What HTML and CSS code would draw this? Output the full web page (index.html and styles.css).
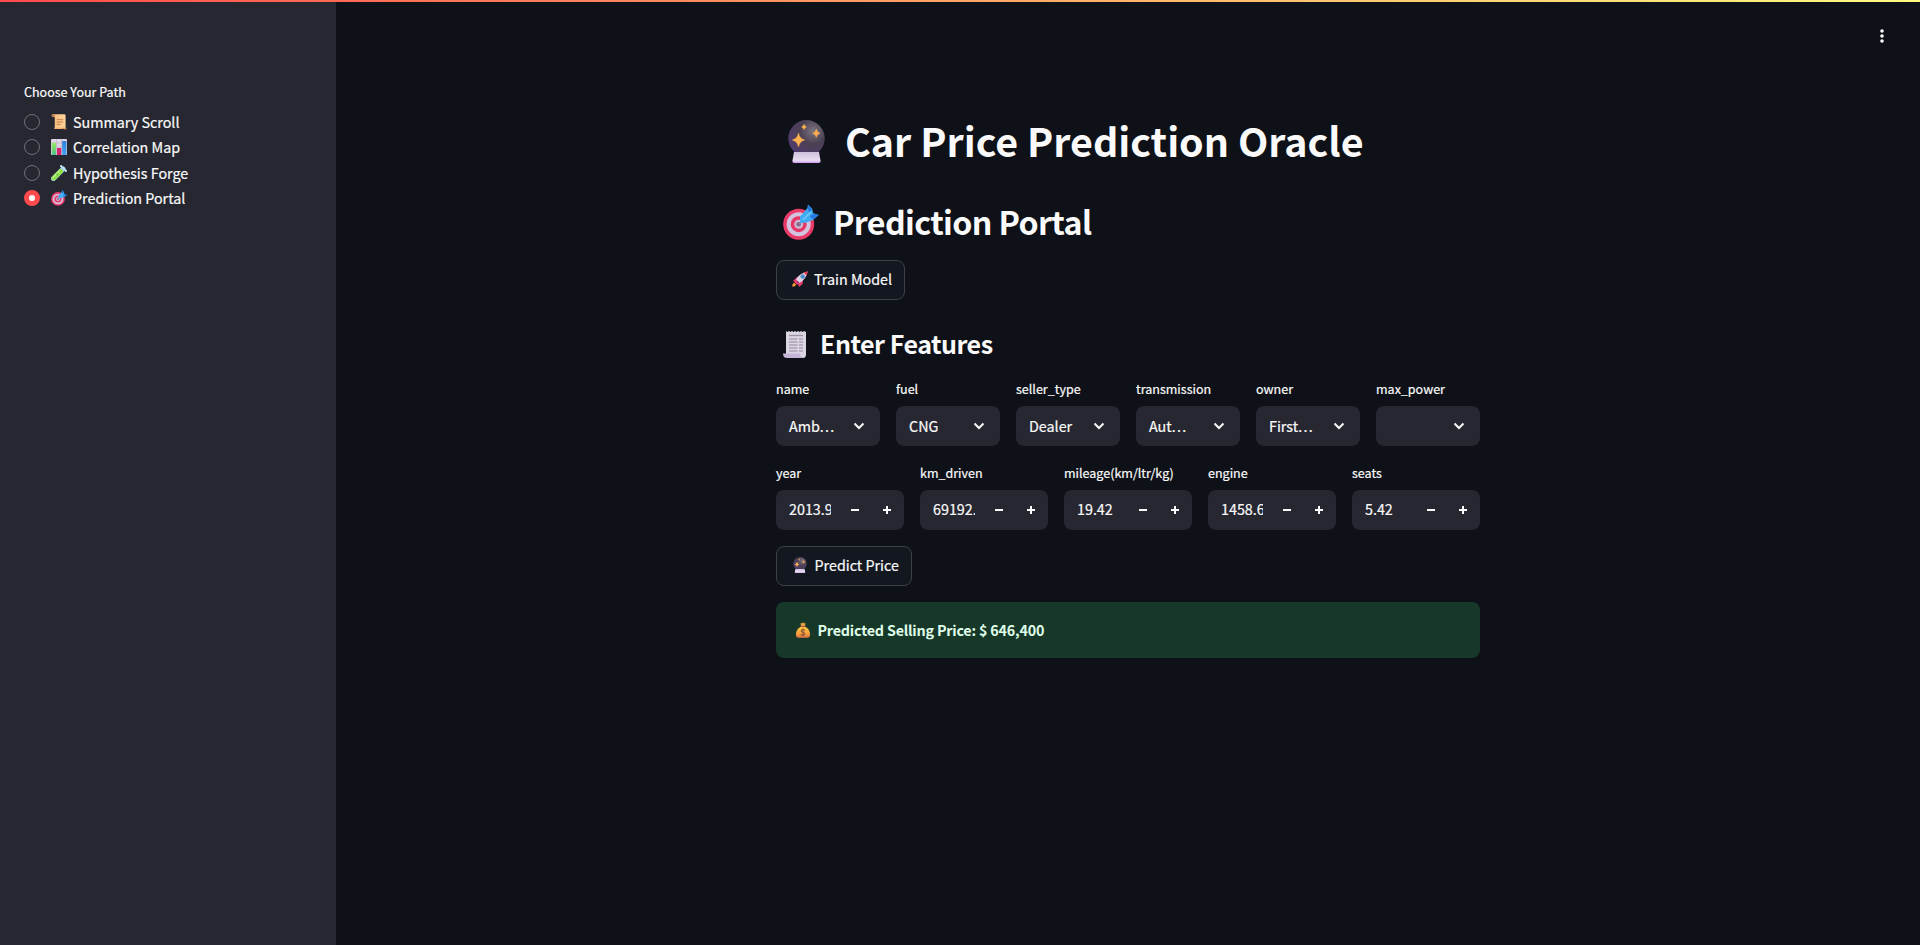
FILE: index.html
```html
<!DOCTYPE html>
<html lang="en">
<head>
<meta charset="utf-8">
<title>Car Price Prediction Oracle</title>
<link rel="stylesheet" href="styles.css">
</head>
<body>
<svg class="defs" width="0" height="0" aria-hidden="true">
  <defs>
    <radialGradient id="ballFill" cx=".68" cy=".3" r=".8"><stop offset="0" stop-color="#7b7480"/><stop offset=".45" stop-color="#4a4052"/><stop offset="1" stop-color="#523a72"/></radialGradient>
    <linearGradient id="baseFill" x1="0" y1="0" x2="0" y2="1"><stop offset="0" stop-color="#cfc0dc"/><stop offset=".75" stop-color="#e8def0"/><stop offset="1" stop-color="#cf9cf0"/></linearGradient>
    <linearGradient id="starFill" x1="0" y1="0" x2="1" y2="1"><stop offset="0" stop-color="#ffc24a"/><stop offset="1" stop-color="#ff9d5c"/></linearGradient>
    <linearGradient id="scrollFill" x1="0" y1="0" x2="1" y2="0"><stop offset="0" stop-color="#f5b97a"/><stop offset="1" stop-color="#ffd49a"/></linearGradient>
    <linearGradient id="bagFill" x1="0" y1="0" x2="0" y2="1"><stop offset="0" stop-color="#ffc83f"/><stop offset=".6" stop-color="#f9a13c"/><stop offset="1" stop-color="#d96f45"/></linearGradient>
    <linearGradient id="greenFill" x1="0" y1="0" x2="0" y2="1"><stop offset="0" stop-color="#93e85c"/><stop offset="1" stop-color="#4fc08a"/></linearGradient>
    <linearGradient id="blueFill" x1="0" y1="0" x2="0" y2="1"><stop offset="0" stop-color="#2f7fe0"/><stop offset="1" stop-color="#3fa5ee"/></linearGradient>
  </defs>
  <symbol id="ball" viewBox="0 0 37 43">
    <circle cx="18.5" cy="18.3" r="18.2" fill="url(#ballFill)"/>
    <path d="M6 32h25l1.600 9q.2 2-2 2H6.200q-2 0-1.800-2z" fill="url(#baseFill)"/>
    <path d="M10.500 13q1.200 5.800 6.300 7-5.100 1.200-6.300 7-1.200-5.800-6.300-7 5.100-1.200 6.300-7zM28.300 9q.8 3.300 3.700 4.200-2.900.9-3.700 4.200-.8-3.300-3.700-4.200 2.900-.9 3.700-4.200zM16 4.200q.5 2.200 2.500 2.800-2 .6-2.500 2.800-.5-2.200-2.500-2.800 2-.6 2.500-2.800z" fill="url(#starFill)" stroke="#ffad4a" stroke-width=".4"/>
  </symbol>
  <symbol id="target" viewBox="0 0 36 36">
    <circle cx="15.700" cy="20.200" r="15.500" fill="#e93a68"/>
    <circle cx="15.700" cy="20.200" r="12" fill="#d4c3df"/>
    <circle cx="15.700" cy="20.200" r="8" fill="#e83767"/>
    <circle cx="15.700" cy="20.200" r="4.500" fill="#cab8d5"/>
    <circle cx="15.700" cy="20.200" r="2.300" fill="#806c88"/>
    <path d="M15.700 20.200L25 10.500" stroke="#8e7c98" stroke-width="1.600"/>
    <path d="M17 12.500l7.500-8.500L25 .5l4.200 4.300 1 4.500 5.500 1.700-6.500 5.500-7 2.200-5.200.2z" fill="#41aaf2"/>
    <path d="M24.500 4l.5-3.500 4.200 4.300-2.700 5zM27 12.500l3.200-3.200 5.500 1.700-5.500 4.700z" fill="#257bdd"/>
    <path d="M20 15.800l8-8" stroke="#72cff9" stroke-width="1.400"/>
  </symbol>
  <symbol id="page" viewBox="0 0 23 28">
    <path d="M3 1l1.500 1L6 1l1.500 1L9 1l1.500 1L12 1l1.500 1L15 1l1.500 1L18 1l1.500 1L21 1l2 1v23q-.3 3-3 3L3 24z" fill="#dcd5e2"/>
    <path d="M0 23.500h17q0 4.500 3.500 4.500H4q-4 0-4-4.500z" fill="#c5b5d8"/>
    <path d="M6 5.500h14" stroke="#9c92a5" stroke-width="1.300"/>
    <path d="M6 9h8.500m1.500 0h4M6 12h8.500m1.500 0h4M6 15h8.500m1.500 0h4M6 18h8.500m1.500 0h4M6 21h8.500m1.500 0h4" stroke="#aea3b7" stroke-width="1.500"/>
  </symbol>
  <symbol id="rocket" viewBox="0 0 16 16">
    <path d="M1 10l4-4 3 1-4 5zM6 13l2-4 3 1-.5 3L7 16z" fill="#e63a6e"/>
    <path d="M4 8.500Q7 2.500 15.500.5 14.500 8 7.500 12z" fill="#dcd3e5"/>
    <path d="M11.500 1.700Q13.500.8 15.800.2q-.2 2.300-1.300 4.300z" fill="#ef3c58"/>
    <path d="M3.500 9l3.800 3.500-2 1.300-2.600-2.500z" fill="#ee3a70"/>
    <circle cx="10.700" cy="5.600" r="2" fill="#3c8ed8" stroke="#8897b3" stroke-width=".8"/>
    <path d="M.3 15.800Q0 12.500 2.500 11.800L4.300 13.500Q3.500 15.800.3 15.800z" fill="#f39331"/>
  </symbol>
  <symbol id="scroll" viewBox="0 0 16 17">
    <path d="M2 .3h11.500q1.500 0 1.500 1.500V15H3.500V3.500Q.2 3.500.2 1.700.3.300 2 .3z" fill="url(#scrollFill)"/>
    <path d="M.2 1.700Q.3.300 2 .3q1.600.1 1.600 3.200Q.2 3.500.2 1.700z" fill="#c67f4f"/>
    <path d="M2.500 14.500h10q.5 1.500 1.800 1.500H4.500q-2 0-2-1.500z" fill="#f3b473"/>
    <path d="M12.300 14.500H16q0 2-1.800 2t-1.900-2z" fill="#d88a50"/>
    <path d="M5.500 6h7M5.500 8.500h7M5.500 11h4.500" stroke="#c97f4d"/>
  </symbol>
  <symbol id="chart" viewBox="0 0 16 16">
    <rect width="16" height="16" rx=".8" fill="#ddd5e3"/>
    <path d="M0 4h16M0 8h16M0 12h16M5.500 0v16M10.500 0v16" stroke="#b9aec3" stroke-width=".6"/>
    <rect x=".8" y="4" width="4.200" height="12" fill="url(#greenFill)"/>
    <rect x="6" y="9" width="4.200" height="7" fill="#d8236f"/>
    <rect x="11.200" y="2" width="4.200" height="14" fill="url(#blueFill)"/>
  </symbol>
  <symbol id="tube" viewBox="0 0 16 16">
    <path d="M2.500 13.500L12 4" stroke="#a4cbe4" stroke-width="5.200" stroke-linecap="round"/>
    <path d="M2.800 13.200L9.700 6.300" stroke="#8ee04c" stroke-width="4.600" stroke-linecap="round"/>
    <path d="M2.200 12.400L8.400 6.200" stroke="#c4f589" stroke-width="1.200" stroke-linecap="round"/>
    <path d="M10 1l5 5" stroke="#b9dff4" stroke-width="2" stroke-linecap="round"/>
    <circle cx="6.300" cy="9.500" r=".8" fill="#4da534"/>
  </symbol>
  <symbol id="bag" viewBox="0 0 15 17">
    <path d="M4.700 1l1.400.6L7.500.3l1.400 1.300 1.400-.6-.8 3.500h-4z" fill="#e9a23e"/>
    <path d="M5 5h5q5 3 5 8 0 3.800-3 3.800H3q-3 0-3-3.800Q0 8 5 5z" fill="url(#bagFill)"/>
    <path d="M4.800 4.800h5.400" stroke="#a95d43" stroke-width="1.300"/>
    <path d="M9.500 9q-.5-1-2-1T5.600 9.500q0 1.200 1.900 1.500t1.900 1.600Q9.400 14 7.500 14t-2.100-1.200M7.500 7v8" fill="none" stroke="#8a5238" stroke-width="1.100"/>
  </symbol>
  <symbol id="chevron" viewBox="0 0 12 8"><path d="M1.500 1.500L6 6l4.500-4.500" fill="none" stroke="#fafafa" stroke-width="2"/></symbol>
  <symbol id="minus" viewBox="0 0 8 8"><path d="M0 4h8" stroke="#fafafa" stroke-width="2"/></symbol>
  <symbol id="plus" viewBox="0 0 8 8"><path d="M0 4h8M4 0v8" stroke="#fafafa" stroke-width="2"/></symbol>
</svg>
<div class="decoration"></div>
<div class="app">
  <aside class="sidebar">
    <div class="label">Choose Your Path</div>
    <div class="radios">
      <div class="radio"><span class="dot"></span><svg class="emoji"><use href="#scroll"/></svg><span>Summary Scroll</span></div>
      <div class="radio"><span class="dot"></span><svg class="emoji"><use href="#chart"/></svg><span>Correlation Map</span></div>
      <div class="radio"><span class="dot"></span><svg class="emoji"><use href="#tube"/></svg><span>Hypothesis Forge</span></div>
      <div class="radio"><span class="dot checked"></span><svg class="emoji"><use href="#target"/></svg><span>Prediction Portal</span></div>
    </div>
  </aside>
  <main class="main">
    <svg class="menu" viewBox="0 0 6 16"><circle cx="3" cy="3" r="1.800"/><circle cx="3" cy="8" r="1.800"/><circle cx="3" cy="13" r="1.800"/></svg>
    <div class="content">
      <h1 class="title"><svg class="title-icon"><use href="#ball"/></svg><span>Car Price Prediction Oracle</span></h1>
      <h2 class="section"><svg class="section-icon"><use href="#target"/></svg><span>Prediction Portal</span></h2>
      <button class="button train"><svg class="emoji"><use href="#rocket"/></svg><span>Train Model</span></button>
      <h3 class="subsection"><svg class="subsection-icon"><use href="#page"/></svg><span>Enter Features</span></h3>
      <div class="row selects">
        <div class="field"><div class="label">name</div><div class="select"><span>Amb<i class="dots">...</i></span><svg class="chevron"><use href="#chevron"/></svg></div></div>
        <div class="field"><div class="label">fuel</div><div class="select"><span>CNG</span><svg class="chevron"><use href="#chevron"/></svg></div></div>
        <div class="field"><div class="label">seller_type</div><div class="select"><span>Dealer</span><svg class="chevron"><use href="#chevron"/></svg></div></div>
        <div class="field"><div class="label">transmission</div><div class="select"><span>Aut<i class="dots">...</i></span><svg class="chevron"><use href="#chevron"/></svg></div></div>
        <div class="field"><div class="label">owner</div><div class="select"><span>First<i class="dots">...</i></span><svg class="chevron"><use href="#chevron"/></svg></div></div>
        <div class="field"><div class="label">max_power</div><div class="select"><span></span><svg class="chevron"><use href="#chevron"/></svg></div></div>
      </div>
      <div class="row numbers">
        <div class="field"><div class="label">year</div><div class="number"><span class="value">2013.9</span><span class="step"><svg><use href="#minus"/></svg></span><span class="step"><svg><use href="#plus"/></svg></span></div></div>
        <div class="field"><div class="label">km_driven</div><div class="number"><span class="value">69192.</span><span class="step"><svg><use href="#minus"/></svg></span><span class="step"><svg><use href="#plus"/></svg></span></div></div>
        <div class="field"><div class="label">mileage(km/ltr/kg)</div><div class="number"><span class="value">19.42</span><span class="step"><svg><use href="#minus"/></svg></span><span class="step"><svg><use href="#plus"/></svg></span></div></div>
        <div class="field"><div class="label">engine</div><div class="number"><span class="value">1458.6</span><span class="step"><svg><use href="#minus"/></svg></span><span class="step"><svg><use href="#plus"/></svg></span></div></div>
        <div class="field"><div class="label">seats</div><div class="number"><span class="value">5.42</span><span class="step"><svg><use href="#minus"/></svg></span><span class="step"><svg><use href="#plus"/></svg></span></div></div>
      </div>
      <button class="button predict"><svg class="emoji"><use href="#ball"/></svg><span>Predict Price</span></button>
      <div class="alert"><svg class="emoji"><use href="#bag"/></svg><span>Predicted Selling Price: $ 646,400</span></div>
    </div>
  </main>
</div>
</body>
</html>
```
FILE: styles.css
```css
* { box-sizing: border-box; }
body {
  margin: 0;
  height: 945px;
  overflow: hidden;
  background: #0e1117;
  color: #fafafa;
  font-family: "Noto Sans CJK SC", "Noto Sans", sans-serif;
  font-size: 14.32px;
  line-height: 24px;
  white-space: nowrap;
  -webkit-text-stroke: .2px;
}
svg { display: block; flex: none; }
.defs { position: absolute; }
.decoration {
  position: absolute;
  top: 0;
  left: 0;
  z-index: 2;
  width: 100%;
  height: 2px;
  background: linear-gradient(90deg, #ff4b4b, #fffd80);
}
.app { display: flex; height: 945px; }
.sidebar { flex: none; width: 336px; padding: 81px 24px 0; background: #262730; }
.label { height: 21px; font-size: 12.53px; line-height: 21px; }
.radios { display: flex; flex-direction: column; padding-top: 6.800px; }
.radio { display: flex; align-items: center; height: 25.500px; }
.radio .emoji { width: 16px; height: 16px; margin: 0 6px 0 11px; }
.dot { width: 16px; height: 16px; border: 1px solid #6f7077; border-radius: 50%; }
.dot.checked { border: 5px solid #ff4b4b; background: #fafafa; }
.main { position: relative; flex: 1; padding-top: 113px; }
.menu { position: absolute; top: 28px; right: 35px; width: 6px; height: 16px; fill: #fafafa; }
.content { display: flex; flex-direction: column; align-items: flex-start; width: 704px; margin-left: 440px; }
.title, .section, .subsection { display: flex; align-items: center; margin: 0; -webkit-text-stroke: 0; }
.title { height: 53px; font-size: 39.400px; font-weight: 700; line-height: 53px; }
.title-icon { width: 37px; height: 43px; margin: 4px 20px 0 12px; }
.section { height: 44px; margin-top: 33px; font-size: 32.200px; font-weight: 600; line-height: 44px; letter-spacing: -.63px; }
.section-icon { width: 36px; height: 36px; margin: 2px 14px 0 7px; }
.subsection { height: 34px; margin-top: 26px; font-size: 25.070px; font-weight: 600; line-height: 34px; letter-spacing: -.5px; }
.subsection-icon { width: 23px; height: 28px; margin: 2px 14px 0 7px; }
.button {
  display: flex;
  align-items: center;
  height: 40px;
  padding: 0 0 2px 15px;
  border: 1px solid #3d4045;
  border-radius: 8px;
  background: #131720;
  color: #fafafa;
  font: inherit;
}
.button .emoji { width: 16px; height: 16px; }
.train { width: 129px; margin-top: 17px; }
.train .emoji { margin-right: 6px; }
.predict { width: 136px; margin-top: 16px; }
.predict .emoji { margin-right: 6.500px; }
.row { display: grid; gap: 16px; width: 100%; }
.selects { grid-template-columns: repeat(6, 1fr); margin-top: 18px; }
.numbers { grid-template-columns: repeat(5, 1fr); margin-top: 16px; }
.field { display: flex; flex-direction: column; gap: 7px; min-width: 0; }
.select {
  display: flex;
  align-items: center;
  justify-content: space-between;
  height: 40px;
  padding: 0 15px 0 13px;
  border-radius: 8px;
  background: #262730;
}
.dots { font-style: normal; letter-spacing: 1.300px; }
.chevron { width: 12px; height: 8px; }
.number { display: flex; align-items: center; height: 40px; padding: 0 1px 0 13px; border-radius: 8px; background: #262730; }
.value { width: 42px; margin-right: auto; padding-bottom: 2px; overflow: hidden; }
.step { display: flex; align-items: center; justify-content: center; width: 32px; height: 38px; }
.step svg { width: 8px; height: 8px; }
.alert {
  display: flex;
  align-items: center;
  width: 100%;
  height: 56px;
  margin-top: 16px;
  padding-left: 19px;
  border-radius: 8px;
  background: #173828;
  color: #dffde9;
  font-weight: 600;
  letter-spacing: -.2px;
  -webkit-text-stroke: 0;
}
.alert .emoji { width: 16px; height: 16px; margin-right: 6.500px; }
```
